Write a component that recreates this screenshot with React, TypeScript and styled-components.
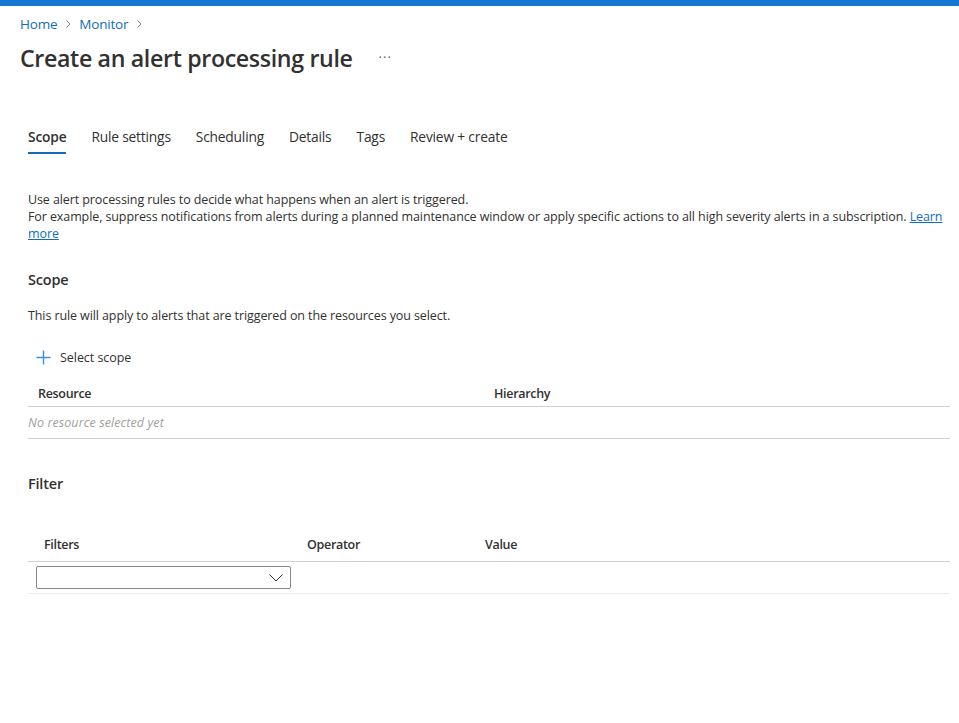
import React from "react";
import styled, { createGlobalStyle } from "styled-components";

const Global = createGlobalStyle`
  html, body { margin: 0; padding: 0; background: #fff; }
  body { font-family: "Open Sans", "Noto Sans", sans-serif; color: #323130; }
  * { box-sizing: border-box; }
`;

const TopBar = styled.div`
  height: 6px;
  background: #1677d2;
`;

const Header = styled.header`
  padding: 9px 20px 0 20px;
`;

const Crumbs = styled.nav`
  display: flex;
  align-items: center;
  gap: 6px;
  height: 18px;
  font-size: 13.5px;
  letter-spacing: -0.2px;
`;

const CrumbLink = styled.a`
  color: #0f6cbd;
  text-decoration: none;
`;

const Chevron = styled.svg`
  width: 10px;
  height: 10px;
  color: #8a8886;
`;

const TitleRow = styled.div`
  display: flex;
  align-items: center;
  margin-top: 8px;
  height: 34px;
`;

const Title = styled.h1`
  margin: 0;
  font-size: 23.2px;
  font-weight: 600;
  letter-spacing: -0.35px;
  color: #323130;
`;

const More = styled.span`
  margin-left: 26px;
  color: #605e5c;
  font-size: 13px;
  letter-spacing: 1px;
  margin-top: -2px;
`;

const Content = styled.main`
  padding: 0 9px 0 28px;
`;

const Tabs = styled.div`
  display: flex;
  gap: 25px;
  margin-top: 51px;
`;

const Tab = styled.div<{ $active?: boolean }>`
  font-size: 13.8px;
  letter-spacing: -0.2px;
  color: #323130;
  padding: 1px 0 6px;
  border-bottom: 2px solid ${(p) => (p.$active ? "#0f6cbd" : "transparent")};
  font-weight: ${(p) => (p.$active ? 600 : 400)};
`;

const Intro = styled.p`
  margin: 37px 0 0;
  font-size: 12.5px;
  line-height: 17px;
  letter-spacing: -0.1px;
  color: #323130;
`;

const Learn = styled.a`
  color: #0f6cbd;
  text-decoration: underline;
`;

const SectionTitle = styled.h2<{ $top: number }>`
  margin: ${(p) => p.$top}px 0 0;
  font-size: 14.5px;
  font-weight: 600;
  letter-spacing: -0.2px;
  line-height: 20px;
  color: #323130;
`;

const Note = styled.p`
  margin: 17px 0 0;
  font-size: 12.5px;
  letter-spacing: -0.1px;
  line-height: 17px;
`;

const AddButton = styled.button`
  display: flex;
  align-items: center;
  gap: 9px;
  margin: 24px 0 0 8px;
  padding: 0;
  border: 0;
  background: none;
  font-family: inherit;
  font-size: 12.5px;
  letter-spacing: -0.05px;
  color: #323130;
  height: 18px;
`;

const Table = styled.div<{ $cols: string; $top: number }>`
  display: grid;
  grid-template-columns: ${(p) => p.$cols};
  margin-top: ${(p) => p.$top}px;
`;

const HeadCell = styled.div<{ $pad?: number; $h?: number }>`
  font-size: 12.5px;
  font-weight: 600;
  letter-spacing: -0.3px;
  color: #323130;
  padding: 0 0 0 ${(p) => p.$pad ?? 0}px;
  height: ${(p) => p.$h ?? 27}px;
  display: flex;
  align-items: center;
  border-bottom: 1px solid #d2d0ce;
`;

const EmptyCell = styled.div`
  grid-column: 1 / -1;
  height: 32px;
  display: flex;
  align-items: center;
  font-size: 12.5px;
  letter-spacing: 0.1px;
  font-style: italic;
  color: #a19f9d;
  border-bottom: 1px solid #d2d0ce;
`;

const RowCell = styled.div`
  height: 32px;
  display: flex;
  align-items: center;
  border-bottom: 1px solid #edebe9;
`;

const Select = styled.div`
  width: 255px;
  height: 23px;
  margin-left: 8px;
  border: 1px solid #8a8886;
  border-radius: 2px;
  display: flex;
  align-items: center;
  justify-content: flex-end;
  padding-right: 7px;
  color: #323130;
`;

export default function App() {
  return (
    <>
      <Global />
      <TopBar />
      <Header>
        <Crumbs>
          <CrumbLink>Home</CrumbLink>
          <Chevron viewBox="0 0 10 10" fill="none" stroke="currentColor" strokeWidth="1">
            <path d="M3.5 1.5 L7 5 L3.5 8.5" />
          </Chevron>
          <CrumbLink>Monitor</CrumbLink>
          <Chevron viewBox="0 0 10 10" fill="none" stroke="currentColor" strokeWidth="1">
            <path d="M3.5 1.5 L7 5 L3.5 8.5" />
          </Chevron>
        </Crumbs>
        <TitleRow>
          <Title>Create an alert processing rule</Title>
          <More>···</More>
        </TitleRow>
      </Header>
      <Content>
        <Tabs>
          <Tab $active>Scope</Tab>
          <Tab>Rule settings</Tab>
          <Tab>Scheduling</Tab>
          <Tab>Details</Tab>
          <Tab>Tags</Tab>
          <Tab>Review + create</Tab>
        </Tabs>
        <Intro>
          Use alert processing rules to decide what happens when an alert is triggered.
          <br />
          For example, suppress notifications from alerts during a planned maintenance window or apply
          specific actions to all high severity alerts in a subscription. <Learn>Learn more</Learn>
        </Intro>
        <SectionTitle $top={28}>Scope</SectionTitle>
        <Note>This rule will apply to alerts that are triggered on the resources you select.</Note>
        <AddButton>
          <svg width="15" height="15" viewBox="0 0 15 15" fill="none" stroke="#3a8ee6" strokeWidth="1.4">
            <path d="M7.5 0.5 V14.5 M0.5 7.5 H14.5" />
          </svg>
          Select scope
        </AddButton>
        <Table $cols="466px 1fr" $top={14}>
          <HeadCell $pad={10}>Resource</HeadCell>
          <HeadCell>Hierarchy</HeadCell>
          <EmptyCell>No resource selected yet</EmptyCell>
        </Table>
        <SectionTitle $top={35}>Filter</SectionTitle>
        <Table $cols="263px 194px 1fr" $top={33}>
          <HeadCell $pad={16} $h={35}>Filters</HeadCell>
          <HeadCell $pad={16} $h={35}>Operator</HeadCell>
          <HeadCell $h={35}>Value</HeadCell>
          <RowCell>
            <Select>
              <svg width="14" height="8" viewBox="0 0 14 8" fill="none" stroke="#323130" strokeWidth="1">
                <path d="M0.5 0.5 L7 7 L13.5 0.5" />
              </svg>
            </Select>
          </RowCell>
          <RowCell />
          <RowCell />
        </Table>
      </Content>
    </>
  );
}
